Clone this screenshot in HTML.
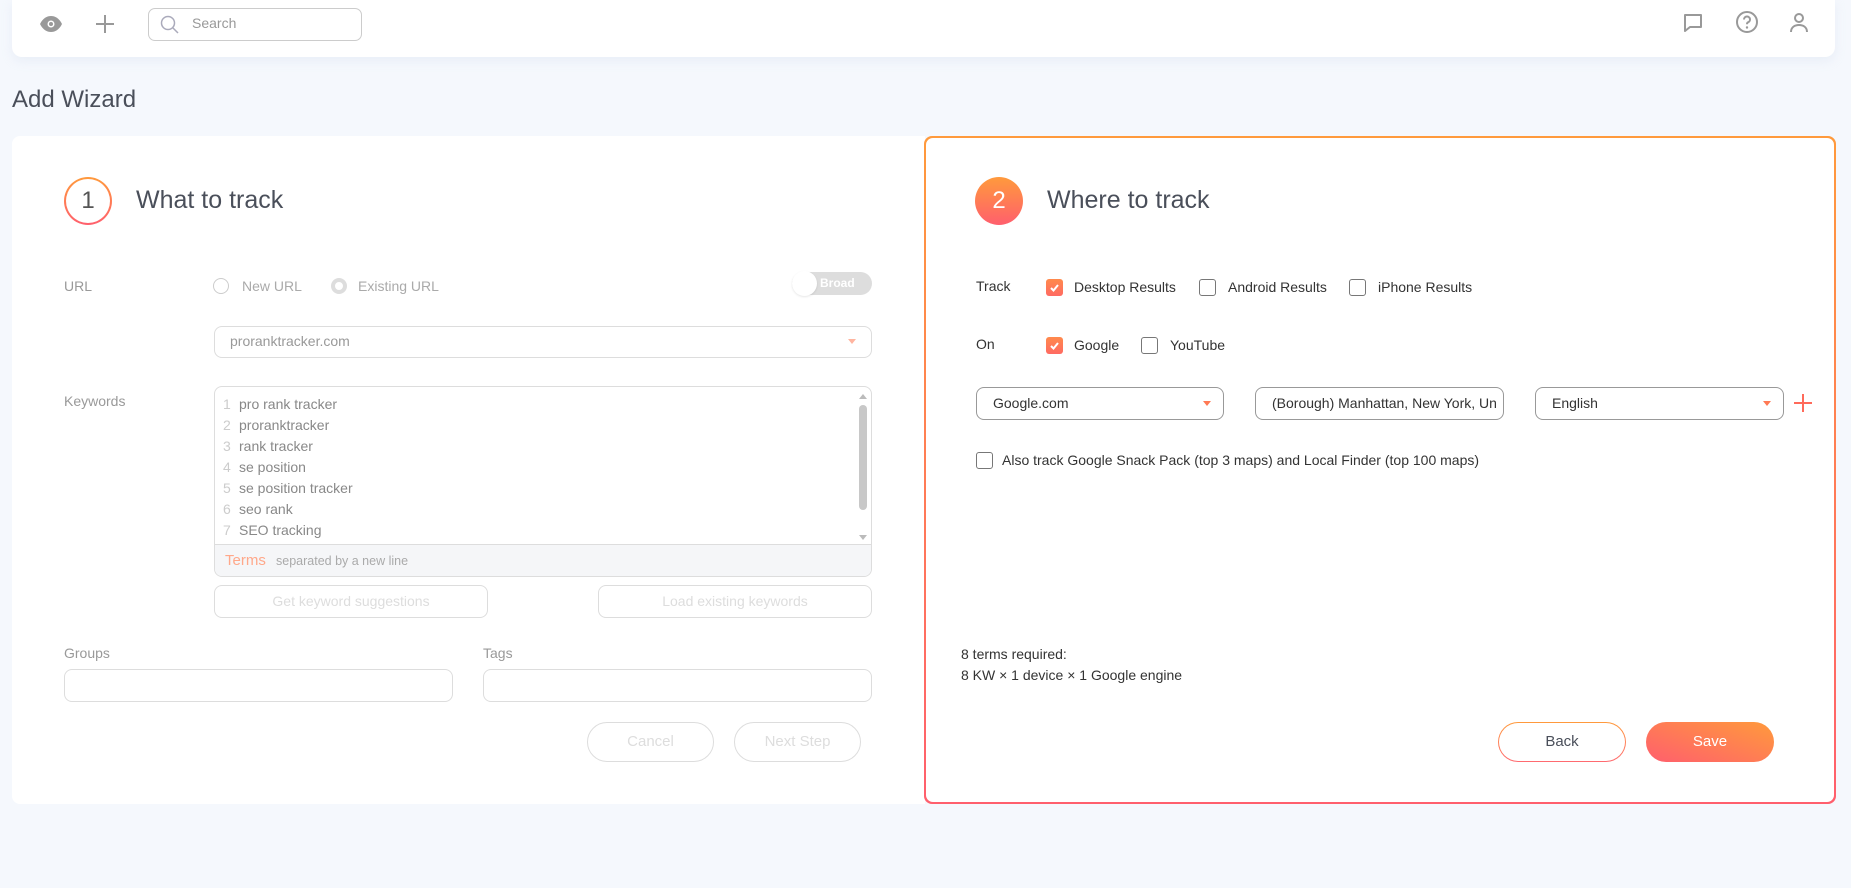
<!DOCTYPE html>
<html><head><meta charset="utf-8"><style>
*{box-sizing:border-box;margin:0;padding:0}
body{width:1851px;height:888px;background:#f5f8fd;font-family:"Liberation Sans",sans-serif;position:relative;overflow:hidden;color:#333}
.a{position:absolute}
.top{left:12px;top:0;width:1823px;height:57px;background:#fff;border-radius:0 0 10px 10px;box-shadow:0 4px 10px rgba(200,210,230,.25)}
.lbl{font-size:14px;color:#999}
.inp{border:1px solid #ddd;border-radius:8px;background:#fff}
.gbtn{border:1px solid #ddd;border-radius:8px;color:#ddd;font-size:14px;text-align:center}
.pill{border:1px solid #ddd;border-radius:20px;color:#ddd;font-size:15px;text-align:center;line-height:37px}
.cb{width:17px;height:17px;border:1px solid #777;border-radius:3px;background:#fff}
.cbon{width:17px;height:17px;border-radius:3px;background:linear-gradient(#ff8a4c,#ff6a62)}
.t15{font-size:14px;color:#333}
.sel{border:1px solid #999;border-radius:8px;background:#fff;height:33px;font-size:14px;color:#333;line-height:31px;padding-left:16px}
.caret{position:absolute;right:12px;top:13px;width:0;height:0;border-left:4px solid transparent;border-right:4px solid transparent;border-top:5px solid #ff7a55}
.kw{position:absolute;left:8px;font-size:14px;color:#888}
.kw span{color:#ccc;display:inline-block;width:16px}
</style></head><body>
<div class="a top"></div>
<svg class="a" style="left:39px;top:15px" width="24" height="18" viewBox="0 0 24 18"><path d="M1 9C4 3 8 1 12 1s8 2 11 8c-3 6-7 8-11 8S4 15 1 9z" fill="#999"/><circle cx="12" cy="9" r="3.5" fill="#fff"/><circle cx="12" cy="9" r="2" fill="#999"/></svg>
<svg class="a" style="left:95px;top:14px" width="20" height="20"><path d="M10 1v18M1 10h18" stroke="#999" stroke-width="2"/></svg>
<div class="a" style="left:148px;top:8px;width:214px;height:33px;border:1px solid #ccc;border-radius:7px;background:#fff"></div>
<svg class="a" style="left:160px;top:15px" width="20" height="20"><circle cx="8" cy="8" r="6.5" fill="none" stroke="#aab" stroke-width="1.5"/><path d="M13 13l5 5" stroke="#aab" stroke-width="1.5"/></svg>
<div class="a" style="left:192px;top:15px;font-size:14px;color:#999">Search</div>
<svg class="a" style="left:1682px;top:12px" width="22" height="22"><path d="M3 3h16v12H8l-5 4z" fill="none" stroke="#999" stroke-width="2" stroke-linejoin="round"/></svg>
<svg class="a" style="left:1735px;top:10px" width="24" height="24"><circle cx="12" cy="12" r="10" fill="none" stroke="#999" stroke-width="2"/><path d="M9 9.5a3 3 0 1 1 4 2.8c-.8.4-1 1-1 2" fill="none" stroke="#999" stroke-width="2"/><circle cx="12" cy="17.5" r="1.2" fill="#999"/></svg>
<svg class="a" style="left:1788px;top:11px" width="22" height="22"><circle cx="11" cy="7" r="4" fill="none" stroke="#999" stroke-width="2"/><path d="M3 21c0-5 4-7 8-7s8 2 8 7" fill="none" stroke="#999" stroke-width="2"/></svg>
<div class="a" style="left:12px;top:86px;font-size:24px;color:#4a4f5a">Add Wizard</div>

<div class="a" style="left:12px;top:136px;width:913px;height:668px;background:#fff;border-radius:8px 0 0 8px"></div>
<div class="a" style="left:64px;top:177px;width:48px;height:48px;border-radius:50%;background:linear-gradient(#ff9a3c,#ff5f6d)"></div>
<div class="a" style="left:66px;top:179px;width:44px;height:44px;border-radius:50%;background:#fff;text-align:center;line-height:44px;font-size:24px;color:#555">1</div>
<div class="a" style="left:136px;top:186px;font-size:25px;color:#4a4f5a">What to track</div>
<div class="a lbl" style="left:64px;top:278px">URL</div>
<div class="a" style="left:213px;top:278px;width:16px;height:16px;border:1px solid #ccc;border-radius:50%"></div>
<div class="a lbl" style="left:242px;top:278px;color:#aaa">New URL</div>
<div class="a" style="left:331px;top:278px;width:16px;height:16px;border:4px solid #ddd;border-radius:50%;background:#fff"></div>
<div class="a lbl" style="left:358px;top:278px;color:#aaa">Existing URL</div>
<div class="a" style="left:792px;top:272px;width:80px;height:23px;border-radius:12px;background:#ddd"></div>
<div class="a" style="left:792px;top:271px;width:25px;height:25px;border-radius:50%;background:#fff;box-shadow:0 1px 2px rgba(0,0,0,.1)"></div>
<div class="a" style="left:820px;top:276px;font-size:12px;color:#fff;font-weight:bold">Broad</div>
<div class="a inp" style="left:214px;top:326px;width:658px;height:32px"></div>
<div class="a" style="left:230px;top:333px;font-size:14px;color:#999">proranktracker.com</div>
<div class="a" style="left:848px;top:339px;border-left:4px solid transparent;border-right:4px solid transparent;border-top:5px solid #ffb5a0"></div>
<div class="a lbl" style="left:64px;top:393px">Keywords</div>
<div class="a inp" style="left:214px;top:386px;width:658px;height:191px;overflow:hidden">
<div class="kw" style="top:9px"><span>1</span>pro rank tracker</div>
<div class="kw" style="top:30px"><span>2</span>proranktracker</div>
<div class="kw" style="top:51px"><span>3</span>rank tracker</div>
<div class="kw" style="top:72px"><span>4</span>se position</div>
<div class="kw" style="top:93px"><span>5</span>se position tracker</div>
<div class="kw" style="top:114px"><span>6</span>seo rank</div>
<div class="kw" style="top:135px"><span>7</span>SEO tracking</div>
<div style="position:absolute;right:4px;top:7px;border-left:4px solid transparent;border-right:4px solid transparent;border-bottom:5px solid #bbb"></div>
<div style="position:absolute;right:4px;top:148px;border-left:4px solid transparent;border-right:4px solid transparent;border-top:5px solid #bbb"></div>
<div style="position:absolute;right:4px;top:18px;width:8px;height:105px;border-radius:4px;background:#c8c8c8"></div>
<div style="position:absolute;left:0;right:0;bottom:0;height:32px;background:#f5f6f8;border-top:1px solid #ddd"></div>
<div style="position:absolute;left:10px;bottom:7px;font-size:15px;color:#ffa88a">Terms <span style="font-size:12.5px;color:#aaa;margin-left:6px">separated by a new line</span></div>
</div>
<div class="a gbtn" style="left:214px;top:585px;width:274px;height:33px;line-height:31px">Get keyword suggestions</div>
<div class="a gbtn" style="left:598px;top:585px;width:274px;height:33px;line-height:31px">Load existing keywords</div>
<div class="a lbl" style="left:64px;top:645px">Groups</div>
<div class="a lbl" style="left:483px;top:645px">Tags</div>
<div class="a inp" style="left:64px;top:669px;width:389px;height:33px"></div>
<div class="a inp" style="left:483px;top:669px;width:389px;height:33px"></div>
<div class="a pill" style="left:587px;top:722px;width:127px;height:40px">Cancel</div>
<div class="a pill" style="left:734px;top:722px;width:127px;height:40px">Next Step</div>

<div class="a" style="left:924px;top:136px;width:912px;height:668px;border-radius:8px;background:linear-gradient(#ff9a3c,#ff5f6d)"></div>
<div class="a" style="left:926px;top:138px;width:908px;height:664px;border-radius:7px;background:#fff"></div>
<div class="a" style="left:975px;top:177px;width:48px;height:48px;border-radius:50%;background:linear-gradient(#ff9a3c,#ff5f6d);color:#fff;text-align:center;line-height:48px;font-size:24px">2</div>
<div class="a" style="left:1047px;top:186px;font-size:25px;color:#4a4f5a">Where to track</div>
<div class="a t15" style="left:976px;top:278px">Track</div>
<div class="a cbon" style="left:1046px;top:279px"></div><svg class="a" style="left:1049px;top:282px" width="11" height="11"><path d="M2 6l2.5 2.5L9 3" stroke="#fff" stroke-width="2" fill="none"/></svg>
<div class="a t15" style="left:1074px;top:279px">Desktop Results</div>
<div class="a cb" style="left:1199px;top:279px"></div>
<div class="a t15" style="left:1228px;top:279px">Android Results</div>
<div class="a cb" style="left:1349px;top:279px"></div>
<div class="a t15" style="left:1378px;top:279px">iPhone Results</div>
<div class="a t15" style="left:976px;top:336px">On</div>
<div class="a cbon" style="left:1046px;top:337px"></div><svg class="a" style="left:1049px;top:340px" width="11" height="11"><path d="M2 6l2.5 2.5L9 3" stroke="#fff" stroke-width="2" fill="none"/></svg>
<div class="a t15" style="left:1074px;top:337px">Google</div>
<div class="a cb" style="left:1141px;top:337px"></div>
<div class="a t15" style="left:1170px;top:337px">YouTube</div>
<div class="a sel" style="left:976px;top:387px;width:248px">Google.com<div class="caret"></div></div>
<div class="a sel" style="left:1255px;top:387px;width:249px;overflow:hidden;white-space:nowrap">(Borough) Manhattan, New York, Un</div>
<div class="a sel" style="left:1535px;top:387px;width:249px">English<div class="caret"></div></div>
<svg class="a" style="left:1793px;top:393px" width="20" height="20"><path d="M10 1v18M1 10h18" stroke="#ff6a5a" stroke-width="2"/></svg>
<div class="a cb" style="left:976px;top:452px"></div>
<div class="a t15" style="left:1002px;top:452px">Also track Google Snack Pack (top 3 maps) and Local Finder (top 100 maps)</div>
<div class="a" style="left:961px;top:644px;font-size:14px;color:#333;line-height:21px">8 terms required:<br>8 KW × 1 device × 1 Google engine</div>
<div class="a" style="left:1498px;top:722px;width:128px;height:40px;border-radius:20px;background:linear-gradient(#ff9a3c,#ff6a70)"></div>
<div class="a" style="left:1499px;top:723px;width:126px;height:38px;border-radius:19px;background:#fff;text-align:center;line-height:38px;font-size:15px;color:#4a4f5a">Back</div>
<div class="a" style="left:1646px;top:722px;width:128px;height:40px;border-radius:20px;background:linear-gradient(20deg,#ff5f6d,#ff9a3c);text-align:center;line-height:40px;font-size:15px;color:#fff">Save</div>
</body></html>
